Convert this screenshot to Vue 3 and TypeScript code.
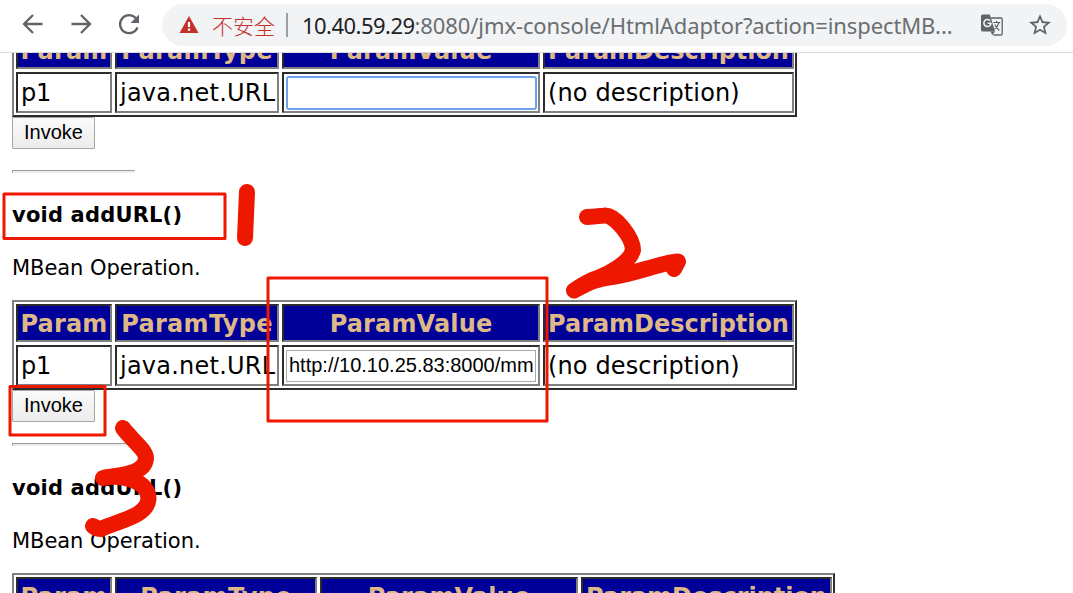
<script setup lang="ts">
interface Operation {
  id: number
  value: string
  focused: boolean
  wide: boolean
}

interface Column {
  label: string
  width: number
}

const columns: Column[] = [
  { label: 'Param', width: 87 },
  { label: 'ParamType', width: 151.7 },
  { label: 'ParamValue', width: 162.6 },
  { label: 'ParamDescription', width: 240.8 },
]

const operations: Operation[] = [
  { id: 1, value: '', focused: true, wide: false },
  { id: 2, value: 'http://10.10.25.83:8000/mm', focused: false, wide: false },
  { id: 3, value: '', focused: false, wide: true },
]

// Spreads the letters of an element so that its text takes the given width.
const vFit = {
  mounted(el: HTMLElement, binding: { value: number }) {
    const natural = el.getBoundingClientRect().width
    const count = (el.textContent ?? '').length
    if (count > 0) el.style.letterSpacing = `${(binding.value - natural) / count}px`
  },
}
</script>

<template>
  <div class="window">
    <header class="toolbar">
      <svg class="nav" viewBox="0 0 24 24"><path d="M21.5 12H3.5M12 3 3 12l9 9" /></svg>
      <svg class="nav" viewBox="0 0 24 24"><path d="M2.500 12h18M12 3l9 9-9 9" /></svg>
      <svg class="nav" viewBox="0 0 24 24">
        <path d="M18.900 6.300A9 9 0 1 0 20.500 15.300" />
        <path class="solid" d="M22 2.500v8.500h-8.500z" />
      </svg>
      <div class="omnibox">
        <svg class="warning" viewBox="0 0 20 18">
          <path d="M10 0 19.500 17H.5z" fill="#c5302a" />
          <path d="M8.900 6h2.200v5H8.900zM8.900 12.500h2.200v2.200H8.900z" fill="#fff" />
        </svg>
        <span class="insecure">不安全</span>
        <span class="divider"></span>
        <div class="url">
          <span v-fit="112.500" class="host">10.40.59.29</span><span v-fit="538">:8080/jmx-console/HtmlAdaptor?action=inspectMB...</span>
        </div>
        <svg class="translate" viewBox="0 0 22 22">
          <path d="M10 4h10q1.200 0 1.200 1.200v14.600q0 1.200-1.200 1.200h-7.500" fill="none" stroke="#5f6368" stroke-width="1.300" />
          <path d="M1.500.5h7.300L14 17.500H1.500Q0 17.500 0 16V2Q0 .5 1.500.5z" fill="#5f6368" />
          <path d="M9.500 17.500H14l-2.600 3.800z" fill="#5f6368" />
          <path d="M9 6.700A3.500 3.500 0 1 0 9.900 9.200H6.600" fill="none" stroke="#f1f3f4" stroke-width="1.600" />
          <path d="M12.200 8.500h7M15.500 7v1.500M18 8.500q-1 4-4.500 6.500M13.800 10.500q1.500 3.500 4.500 6" fill="none" stroke="#5f6368" stroke-width="1.200" />
        </svg>
        <svg class="star" viewBox="0 0 24 24">
          <path d="M22 9.240l-7.190-.62L12 2 9.190 8.630 2 9.240l5.460 4.730L5.820 21 12 17.270 18.180 21l-1.630-7.030L22 9.240zM12 15.400l-3.760 2.270 1-4.280-3.320-2.880 4.380-.38L12 6.100l1.710 4.040 4.380.38-3.320 2.880 1 4.280L12 15.400z" />
        </svg>
      </div>
    </header>

    <main class="viewport">
      <div class="page">
        <section v-for="op in operations" :key="op.id" class="operation">
          <div class="rule"></div>
          <h4><span v-fit="170.200">void addURL()</span></h4>
          <p><span v-fit="188.500">MBean Operation.</span></p>
          <div class="table" :class="{ wide: op.wide }">
            <div v-for="col in columns" :key="col.label" class="cell head">
              <span v-fit="col.width">{{ col.label }}</span>
            </div>
            <div class="cell"><span v-fit="30.200">p1</span></div>
            <div class="cell"><span v-fit="155.400">java.net.URL</span></div>
            <div class="cell field">
              <input type="text" :class="{ focused: op.focused }" :value="op.value" />
            </div>
            <div class="cell"><span v-fit="191.800">(no description)</span></div>
          </div>
          <button type="button">Invoke</button>
        </section>
      </div>
    </main>

    <svg class="marks" viewBox="0 0 1073 593">
      <g class="frames">
        <rect x="4" y="194" width="221" height="44.500" />
        <rect x="268" y="278" width="279" height="143" />
        <rect x="10" y="386.500" width="95" height="48.500" />
      </g>
      <g class="strokes">
        <path d="M247 192 245 238" />
        <path d="M587 217Q600 216 604 215.600C615 214 633 238 633 250C630 263 608 274 598 278C588 281 581 286 574 290.500C585 285 594 279 612 277C632 274 650 267 668 263L678 261.500 674 269" />
        <path d="M123 428C129 437 146 450 146 458C145 475 118 475 103 478C120 474 149 480 148.500 499C147 517 117 521 101 529Q97 529 93 526" />
      </g>
    </svg>
  </div>
</template>

<style>
body {
  margin: 0;
  overflow: hidden;
  background: #fff;
}
</style>

<style scoped>
.window {
  position: relative;
  display: flex;
  flex-direction: column;
  width: 1073px;
  height: 593px;
  overflow: hidden;
  background: #fff;
  font-family: "DejaVu Sans", Verdana, sans-serif;
  color: #000;
}

.toolbar {
  display: flex;
  box-sizing: border-box;
  flex: none;
  align-items: flex-start;
  gap: 24px;
  height: 53px;
  padding: 4px 6px 0 21px;
  border-bottom: 1px solid #d9dbdf;
}

.nav {
  flex: none;
  width: 24px;
  height: 24px;
  margin-top: 8px;
  fill: none;
  stroke: #5f6368;
  stroke-width: 2.3;
}

.nav .solid {
  fill: #5f6368;
  stroke: none;
}

.omnibox {
  display: flex;
  box-sizing: border-box;
  flex: 1;
  align-items: center;
  height: 42px;
  margin-left: -3px;
  padding: 0 14px 0 17px;
  border-radius: 21px;
  background: #f1f3f4;
  white-space: nowrap;
}

.warning {
  width: 20px;
  height: 18px;
}

.insecure {
  width: 63px;
  margin-left: 13px;
  padding-bottom: 1px;
  font: 300 21px/30px "Noto Sans CJK SC", sans-serif;
  color: #c5302a;
}

.divider {
  width: 2px;
  height: 24px;
  margin-left: 11px;
  background: #9b9ea2;
}

.url {
  flex: 1;
  margin-left: 14px;
  padding-bottom: 1px;
  font: 22px/30px "Noto Sans", "Open Sans", sans-serif;
  color: #6b6e72;
}

.host {
  color: #202124;
}

.translate {
  width: 22px;
  height: 22px;
}

.star {
  width: 26px;
  height: 26px;
  margin-left: 24px;
  fill: #5f6368;
}

.viewport {
  flex: 1;
  min-height: 0;
  overflow: hidden;
}

.page {
  margin: -156px 0 0 12px;
}

.operation {
  height: 273px;
}

.rule {
  box-sizing: border-box;
  width: 123px;
  height: 3px;
  border: 1px solid #eee;
  border-top-color: #9a9a9a;
  border-left-color: #9a9a9a;
  background: #eee;
}

h4,
p {
  margin: 0;
  font-size: 21px;
  line-height: 34px;
  white-space: nowrap;
}

h4 {
  margin-top: 25px;
}

p {
  margin-top: 19px;
}

.table {
  display: grid;
  box-sizing: border-box;
  grid-template-columns: 96px 164px 258px 251px;
  grid-template-rows: 38px 41px;
  gap: 3px;
  width: 785px;
  margin-top: 15px;
  padding: 2px 1px 2px 2px;
  border: 2px solid;
  border-color: #808080 #2c2c2c #2c2c2c #808080;
}

.table.wide {
  grid-template-columns: 96px 202px 258px 251px;
  width: 823px;
}

.cell {
  display: flex;
  box-sizing: border-box;
  align-items: center;
  padding: 0 2px 0 3px;
  border: 2px solid;
  border-color: #2c2c2c #808080 #808080 #2c2c2c;
  font-size: 24px;
  line-height: 34px;
  white-space: nowrap;
}

.head {
  justify-content: center;
  padding: 2px 0 0;
  background: #000099;
  color: #deb887;
  font-weight: bold;
  line-height: 32px;
}

.field {
  padding: 0 2px;
}

input {
  box-sizing: border-box;
  width: 250px;
  height: 32px;
  margin: 0;
  padding: 0 2px;
  border: 1px solid #a9a9a9;
  outline: none;
  background: #fff;
  font: 20px "Liberation Sans", Arial, sans-serif;
  color: #000;
}

input.focused {
  width: 251px;
  height: 34px;
  margin: 0 -1px 0 0;
  border: 2px solid #6fa1ee;
  border-radius: 3px;
}

button {
  display: block;
  box-sizing: border-box;
  width: 83px;
  height: 32px;
  margin: 0;
  padding: 0 0 2px;
  border: 1px solid #a6a6a6;
  border-radius: 1px;
  background: linear-gradient(#fafafa, #ececec);
  font: 20px "Liberation Sans", Arial, sans-serif;
  color: #000;
}

.marks {
  position: absolute;
  inset: 0;
  width: 1073px;
  height: 593px;
  pointer-events: none;
}

.frames,
.strokes {
  fill: none;
  stroke: #ee1700;
  stroke-linejoin: round;
  stroke-linecap: round;
}

.frames {
  stroke-width: 3;
}

.strokes {
  stroke-width: 16;
}
</style>
